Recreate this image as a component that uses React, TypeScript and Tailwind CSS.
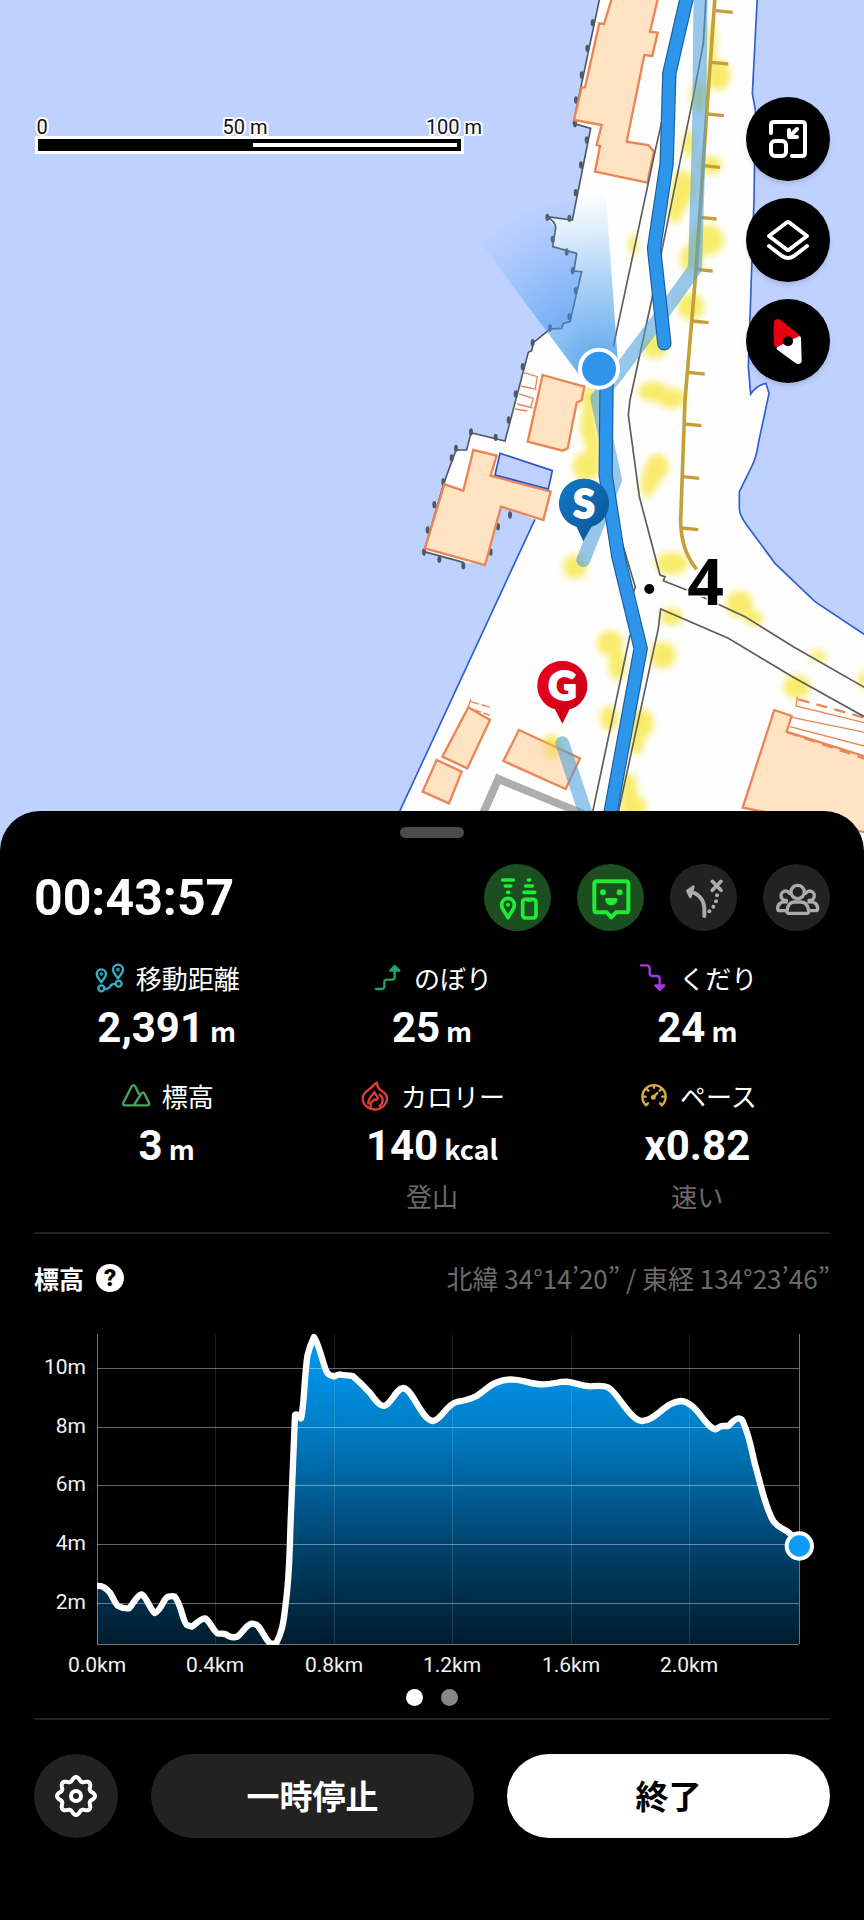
import React from "react";

type IconProps = { children: React.ReactNode; color: string; size: string };

// every small icon is drawn around a 0,0 centre
const Icon = ({ children, color, size }: IconProps) => (
  <svg
    viewBox="-48 -48 96 96"
    className={`shrink-0 overflow-visible ${size}`}
    fill="none"
    stroke={color}
    strokeWidth={7}
    strokeLinecap="round"
    strokeLinejoin="round"
    aria-hidden="true"
  >
    {children}
  </svg>
);

const DistanceIcon = () => (
  <Icon color="#35b0c4" size="size-8">
    <path d="M-26 13C-31 4-40-1-40-12a14 14 0 0 1 28 0c0 11-9 16-14 25z" />
    <path d="M24 1C19-8 9-14 9-25a15 15 0 0 1 30 0c0 11-10 17-15 26z" />
    <circle cx="-26" cy="-12" r="2" />
    <circle cx="24" cy="-25" r="2" />
    <circle cx="-26" cy="31" r="9" />
    <circle cx="26" cy="17" r="9" />
    <path d="M-16 32C4 38-4 14 16 18" />
  </Icon>
);

const UpIcon = () => (
  <Icon color="#1fa566" size="size-8">
    <path d="M-36 33h16q9 0 9-8V13q0-8 8-8h15q8 0 8-8v-30" />
    <path d="M7-22 20-36 34-22z" fill="#1fa566" />
  </Icon>
);

const DownIcon = () => (
  <Icon color="#a23be0" size="size-8">
    <path d="M-36-38h16q10 0 10 8v16q0 8 8 8H12q8 0 8 8v28" />
    <path d="M7 22 20 36 34 22z" fill="#a23be0" />
  </Icon>
);

const MountainIcon = () => (
  <Icon color="#4aa35a" size="size-8">
    <path d="M-33 28H34q8 0 5-8L26-6q-4-8-10-1L-6 27M-33 28q-8 0-5-8L-14-27q6-11 12-1L9-6" />
  </Icon>
);

const FireIcon = () => (
  <Icon color="#e03c36" size="size-8">
    <path d="M6-40C-4-36-8-26-20-18S-37-4-37 6a36 34 0 0 0 73 0C36-8 22-14 14-20 8-26 6-32 6-40z" />
    <path d="M-20 22C-22 6-8 0-2-12c2 10 10 10 10 18 0 6-6 8-10 4M14-4c12 8 12 26 0 34M-12 32c-4-8 0-14 6-18" />
  </Icon>
);

const GaugeIcon = () => (
  <Icon color="#dba94a" size="size-8">
    <path d="M-24 28A35 35 0 1 1 24 28L18 22M-24 28l6-6" />
    <path d="M-3 5 10-9M0-30v5M-21-20l4 4M21-20l-4 4M-30 2h5M30 2h-5" />
    <circle cx="-2" cy="4" r="4" fill="#dba94a" />
  </Icon>
);

const DevicesIcon = () => (
  <svg viewBox="-69 -69 138 138" className="size-[46px]" fill="none" stroke="#1fec34" strokeWidth={11} strokeLinecap="round" strokeLinejoin="round" aria-hidden="true">
    <path d="M-46-54h32M-38-36h16M-31-17h3M31-54h4M23-36h20M18-17h32" />
    <path d="M-30 59C-36 45-49 36-49 20a19 19 0 0 1 38 0c0 16-13 25-19 39z" />
    <circle cx="-30" cy="20" r="3" strokeWidth={6} />
    <rect x="14" y="4" width="40" height="56" rx="8" />
    <path d="M30 6h9" />
  </svg>
);

const FaceIcon = () => (
  <svg viewBox="-69 -69 138 138" className="size-[46px]" fill="none" stroke="#1fec34" strokeWidth={12} strokeLinecap="round" strokeLinejoin="round" aria-hidden="true">
    <path d="M-42-50H44q8 0 8 8v77q0 8-8 8H15L1 58-13 43h-29q-8 0-8-8v-77q0-8 8-8z" />
    <circle cx="-24" cy="-17" r="9" fill="#1fec34" stroke="none" />
    <circle cx="26" cy="-17" r="9" fill="#1fec34" stroke="none" />
    <path d="M-17 4q0-4 4-4h28q4 0 4 4c0 24-36 24-36 0z" fill="#1fec34" stroke="none" />
  </svg>
);

const DetourIcon = () => (
  <svg viewBox="-69 -69 138 138" className="size-[46px]" fill="none" stroke="#ababab" strokeWidth={11} strokeLinecap="round" strokeLinejoin="round" aria-hidden="true">
    <path d="M1 54V34C1 6-16-14-46-20" strokeWidth={12} />
    <path d="M-32-34-50-21-41-3z" fill="#ababab" strokeWidth={8} />
    <path d="M25-50 51-23M51-50 25-23" />
    <g fill="#ababab" stroke="none">
      <circle cx="39" cy="-8" r="6" />
      <circle cx="36" cy="10" r="6" />
      <circle cx="28" cy="26" r="6" />
      <circle cx="16" cy="40" r="6" />
    </g>
  </svg>
);

const GroupIcon = () => (
  <svg viewBox="-69 -69 138 138" className="size-[46px]" fill="none" stroke="#ababab" strokeWidth={10} strokeLinecap="round" strokeLinejoin="round" aria-hidden="true">
    <circle cx="2" cy="-18" r="20" />
    <path d="M-25 46q-6 0-5-7C-28 18-18 12-8 12h20c12 0 21 8 23 27q1 7-6 7z" />
    <path d="M-22-14a14 14 0 1 0-10 21M26-14a14 14 0 1 1 10 21" />
    <path d="M-34 38h-18q-6 0-6-6c0-14 10-22 26-20M38 38h18q6 0 6-6c0-14-10-22-26-20" />
  </svg>
);

const gearPath = (() => {
  const pts: string[] = [];
  for (let i = 0; i < 128; i++) {
    const a = (i / 128) * Math.PI * 2;
    const r = 17 + 2 * Math.cos(8 * a);
    pts.push(`${(r * Math.sin(a)).toFixed(2)} ${(-r * Math.cos(a)).toFixed(2)}`);
  }
  return `M${pts.join("L")}Z`;
})();

const GearIcon = () => (
  <svg viewBox="-22 -22 44 44" className="size-11" fill="none" stroke="#fff" strokeWidth={4} strokeLinejoin="round" aria-hidden="true">
    <path d={gearPath} />
    <circle r="5" />
  </svg>
);

const greenSpots = [
  [955, 225, 36, 46], [895, 290, 24, 44], [866, 430, 18, 44], [850, 560, 36, 50], [826, 630, 24, 40],
  [840, 595, 30, 40], [930, 495, 36, 28], [922, 720, 50, 46], [875, 775, 34, 42], [700, 735, 14, 32],
  [872, 920, 40, 40], [765, 1040, 38, 36], [760, 1175, 46, 30], [815, 1195, 44, 30], [572, 1200, 28, 40],
  [567, 1275, 26, 60], [580, 1340, 22, 60], [560, 1400, 42, 42], [772, 1400, 34, 38], [755, 1430, 28, 40],
  [742, 1460, 20, 34], [525, 1700, 36, 36], [815, 1690, 50, 34], [1018, 1812, 40, 40], [1062, 1855, 28, 24],
  [815, 1850, 34, 26], [630, 1930, 40, 38], [652, 1995, 26, 46], [788, 1965, 40, 40], [628, 2155, 28, 38],
  [722, 2170, 40, 44], [710, 2215, 24, 50], [1190, 2060, 40, 36], [1255, 1968, 26, 16], [1390, 2040, 16, 26],
  [455, 2240, 30, 36], [685, 2370, 28, 50], [700, 2420, 40, 34], [935, 130, 14, 70],
];

const embankment = [
  [948, 35], [935, 190], [922, 345], [910, 500], [900, 655], [888, 811],
  [876, 966], [864, 1120], [854, 1275], [848, 1433], [845, 1587],
];

const wallDots = [
  [578, 68], [562, 145], [545, 225], [528, 300], [525, 371], [560, 420], [543, 495], [527, 578], [508, 655],
  [442, 652], [458, 718], [500, 756], [518, 812], [527, 872], [508, 950], [450, 984], [398, 1028], [368, 1100],
  [347, 1182], [326, 1260], [287, 1312], [213, 1296], [168, 1345], [155, 1374], [130, 1446], [103, 1514],
  [83, 1590], [72, 1656], [118, 1678], [190, 1697], [272, 1656], [294, 1580], [330, 1545],
];

const Map = () => (
  <svg viewBox="0 0 2592 2574" preserveAspectRatio="xMidYMin slice" className="block w-full h-[858px] bg-[#bfd1ff]" role="img" aria-label="地図">
    <defs>
      <filter id="soft" x="-50%" y="-50%" width="200%" height="200%">
        <feGaussianBlur stdDeviation="11" />
      </filter>
      <radialGradient id="beam" gradientUnits="userSpaceOnUse" cx="597" cy="1105" r="530">
        <stop offset="0" stopColor="#2f8fe6" stopOpacity=".8" />
        <stop offset=".5" stopColor="#4a9cf0" stopOpacity=".45" />
        <stop offset="1" stopColor="#6aaef5" stopOpacity="0" />
      </radialGradient>
      <linearGradient id="startPin" x1="0" y1="0" x2="1" y2="1">
        <stop offset="0" stopColor="#1478c4" />
        <stop offset="1" stopColor="#0a5496" />
      </linearGradient>
      <linearGradient id="goalPin" x1="0" y1="0" x2="1" y2="1">
        <stop offset="0" stopColor="#f0001c" />
        <stop offset="1" stopColor="#bf0014" />
      </linearGradient>
    </defs>
    <g transform="translate(1200 0)" fill="none">
      {/* land */}
      <path
        fill="#fefefe"
        d="M600-10 545 250 520 370 572 385 517 660 440 650 467 685 458 740 530 760 522 813 545 815 510 965 490 970 485 985 450 987 400 1028 395 1052 385 1057 315 1323 213 1298 200 1350 168 1350 132 1448 72 1655 190 1687 255 1695 303 1520 405 1558 0 2432-60 2574H1392V1905L1245 1805 1125 1690 1040 1575Q1018 1545 1018 1525V1475L1055 1400Q1070 1370 1075 1330L1107 1180 1098 1150Q1070 1155 1052 1182L1045 1100 1062 600 1066 330 1057 280 1072-10z"
      />
      <g stroke="#2f5fd0" strokeWidth="5">
        <path d="M1072-10 1057 280 1066 330 1062 600 1045 1100 1052 1182Q1070 1155 1098 1150L1107 1180 1075 1330Q1070 1370 1055 1400L1018 1475V1525Q1018 1545 1040 1575L1125 1690 1245 1805 1400 1908" />
        <path d="M405 1558 0 2432-60 2574" />
      </g>
      <path
        stroke="#505a66"
        strokeWidth="5"
        d="M600-10 545 250 520 370 572 385 517 660 440 650Q468 665 467 685L458 740 530 760 522 813 545 815 510 965 490 970 485 985 450 987 400 1028 395 1052 385 1057 315 1323 213 1298 200 1350 168 1350 132 1448 72 1655 190 1687"
      />
      <g fill="#505a66">
        {wallDots.map(([x, y]) => (
          <ellipse key={`${x}-${y}`} cx={x} cy={y} rx="6" ry="11" />
        ))}
      </g>

      {/* vegetation */}
      <g fill="#f8e95a" opacity=".9" filter="url(#soft)">
        {greenSpots.map(([x, y, rx, ry]) => (
          <ellipse key={`${x}-${y}`} cx={x} cy={y} rx={rx} ry={ry} />
        ))}
      </g>

      {/* buildings */}
      <g fill="#ffe3c2" stroke="#ea8556" strokeWidth="7">
        <path d="M637-10 612 72 598 70 555 262 545 262 522 360 605 375 590 435 600 438 585 515 742 548 762 455 745 435 680 425 733 165 757 168 773 98 750 95 775-10z" />
        <path d="M428 1125 553 1160 545 1200 530 1208 503 1345 488 1352 383 1325z" />
        <path d="M220 1350 290 1367 272 1427 452 1475 430 1560 303 1520 255 1695 75 1645 133 1453 190 1472z" />
        <path d="M205 2122 270 2160 202 2305 127 2270z" />
        <path d="M110 2280 185 2315 147 2410 68 2375z" />
        <path d="M357 2190 540 2275 497 2367 310 2283z" />
        <path d="M1123 2130 1175 2148 1160 2195 1410 2274V2500L1028 2423z" />
      </g>
      <path d="M438 2215 486 2248 470 2280 430 2262z" fill="#f8d24a" opacity=".6" filter="url(#soft)" />
      <g stroke="#ea8556" strokeWidth="4">
        <path d="M370 1117 412 1130 406 1165M362 1158 410 1168M358 1182 400 1195 392 1220M352 1212 398 1224M345 1227 382 1233" />
        <path d="M205 2120 212 2098M212 2105 272 2122M218 2128 268 2145" strokeDasharray="26 8" />
        <path d="M1192 2090 1188 2118 1400 2170M1175 2152 1400 2198M1170 2180 1400 2240" />
        <path d="M1195 2098 1400 2155M1160 2196 1400 2278" strokeDasharray="34 22" strokeWidth="7" />
      </g>
      <path d="M300 1360 457 1412 445 1467 285 1425z" fill="#bfd1ff" stroke="#2f52c8" strokeWidth="5" />
      <path d="M245 2450 295 2337 570 2450" stroke="#adadad" strokeWidth="24" />

      {/* roads */}
      <g stroke="#5c5c5c" strokeWidth="5">
        <path d="M868 0 765 455 640 1040" />
        <path d="M918-10 910 130 880 290 755 900 690 1200 685 1245 718 1490 780 1725 795 1730 790 1742 860 1770M895 1785 1035 1850 1180 1940 1400 2066" />
        <path d="M1400 2154 1180 2032 985 1915 782 1827 775 1885 652 2450" />
        <path d="M640 1540 706 1762 695 1790M690 1905 575 2450" />
      </g>
      <path d="M945-10 920 340 888 811 855 1200 842 1560Q842 1650 890 1708" stroke="#c3a138" strokeWidth="11" />
      <g stroke="#c3a138" strokeWidth="10">
        {embankment.map(([x, y]) => (
          <path key={y} d={`M${x} ${y - 3}l50 5`} />
        ))}
      </g>

      {/* recorded track */}
      <g stroke="#4c9fdc" strokeWidth="42" strokeLinejoin="round" strokeLinecap="round" opacity=".58">
        <path d="M902-20 897 400 885 805 770 965 650 1125 592 1195 645 1440 550 1680" />
        <path d="M487 2230 570 2480" />
      </g>
      <path d="M548 1138 220 700 400 560 616 560 655 1105z" fill="url(#beam)" />
      <g strokeLinejoin="round" strokeLinecap="round">
        <path d="M868-40 808 220 800 490 762 745 793 1030M620 1110 617 1425 655 1670 722 1945 620 2500" stroke="#1b5f9f" strokeWidth="43" />
        <path d="M868-40 808 220 800 490 762 745 793 1030M620 1110 617 1425 655 1670 722 1945 620 2500" stroke="#2d96ea" strokeWidth="36" />
      </g>
      <circle cx="597" cy="1106" r="57" fill="#2d96ea" stroke="#fff" strokeWidth="12" />

      {/* spot height */}
      <circle cx="748" cy="1767" r="15" fill="#000" />
      <text x="862" y="1814" fill="#000" stroke="#fff" strokeWidth="8" paintOrder="stroke" fontSize="192" fontWeight="700" fontFamily="'Noto Sans', sans-serif">
        4
      </text>

      {/* start / goal pins */}
      <path d="M552 1436a74 74 0 0 1 22 145L550 1624 530 1581a74 74 0 0 1 22-145z" fill="url(#startPin)" />
      <path d="M487 1983a74 74 0 0 1 22 145L487 2171 465 2128a74 74 0 0 1 22-145z" fill="url(#goalPin)" />
      <g fill="#fff" stroke="#fff" strokeWidth="6" strokeLinejoin="round" fontSize="117" fontWeight="900" fontFamily="Lato, sans-serif" textAnchor="middle">
        <text x="552" y="1553">S</text>
        <text x="487" y="2100">G</text>
      </g>
    </g>
  </svg>
);

const ScaleBar = () => (
  <svg viewBox="0 0 456 50" className="absolute left-[34px] top-[112px] w-[456px] h-[50px]" role="img" aria-label="100 m">
    <g fontSize="20" fill="#111" stroke="#fff" strokeWidth="4" strokeLinejoin="round" paintOrder="stroke" fontFamily="Roboto, sans-serif">
      <text x="8" y="22" textAnchor="middle">0</text>
      <text x="211" y="22" textAnchor="middle">50 m</text>
      <text x="420" y="22" textAnchor="middle">100 m</text>
    </g>
    <rect x="1" y="24" width="429" height="18" fill="#fff" />
    <rect x="4" y="27" width="423" height="12" fill="#000" />
    <rect x="219" y="31" width="204" height="4" fill="#fff" />
  </svg>
);

const mapButton =
  "size-[84px] rounded-full bg-black flex items-center justify-center shadow-md shadow-black/10";

const MapButtons = () => (
  <div className="absolute right-[34px] top-[97px] flex flex-col gap-[17px]">
    <button type="button" aria-label="縮小表示" className={mapButton}>
      <svg viewBox="0 0 40 40" className="size-10" fill="none" stroke="#fff" strokeWidth={4} strokeLinecap="round" strokeLinejoin="round">
        <path d="M3 14V6q0-3 3-3h28q3 0 3 3v28q0 3-3 3H24" />
        <rect x="3" y="22" width="15" height="15" rx="4" />
        <path d="M29 10l-7 7M21 11v7h8" />
      </svg>
    </button>
    <button type="button" aria-label="レイヤー" className={mapButton}>
      <svg viewBox="0 0 40 40" className="size-10 overflow-visible" fill="none" stroke="#fff" strokeWidth={4} strokeLinecap="round" strokeLinejoin="round">
        <path d="M18 3q2-2 4 0l17 13-17 13q-2 2-4 0L1 16z" />
        <path d="M1 26l13 10q6 4 12 0l13-10" />
      </svg>
    </button>
    <button type="button" aria-label="コンパス" className={mapButton}>
      <svg viewBox="145 720 120 120" className="size-10 overflow-visible" strokeWidth={10} strokeLinejoin="round">
        <path d="M168 722q6-6 13 0l54 43-66 29q-5-36-1-72z" fill="#e60012" stroke="#e60012" />
        <path d="M176 802l63-31 2 70q-4 6-12 0z" fill="#fff" stroke="#fff" />
        <circle cx="205" cy="781" r="15" fill="#000" />
      </svg>
    </button>
  </div>
);

type StatProps = {
  icon: React.ReactNode;
  label: string;
  value: string;
  unit?: string;
  note?: string;
};

const Stat = ({ icon, label, value, unit, note }: StatProps) => (
  <div className="flex flex-col items-center">
    <div className="flex items-center gap-2.5 text-[26px] leading-10">
      {icon}
      <span>{label}</span>
    </div>
    <p className="font-[Roboto,sans-serif] font-bold text-[42px] leading-[60px]">
      {value}
      {unit && <span className="font-[Noto_Sans_CJK_JP,sans-serif] text-[27px] leading-none ml-1.5">{unit}</span>}
    </p>
    {note && <p className="text-[26px] leading-10 text-[#6b6b6b]">{note}</p>}
  </div>
);

const curve =
  "M291 1095C305 1093 318 1100 330 1115C340 1130 345 1150 355 1155C367 1162 378 1163 387 1162C400 1150 408 1125 425 1120C440 1128 450 1165 464 1176C485 1170 490 1130 505 1127C515 1125 522 1126 524 1127C545 1150 548 1205 562 1213L576 1217C590 1208 600 1192 616 1192C632 1205 645 1237 655 1238C665 1238 672 1237 678 1240C690 1250 705 1249 712 1247C728 1235 738 1212 755 1208C765 1209 772 1212 775 1216C790 1235 800 1262 812 1268L828 1268C845 1235 850 1210 855 1165C870 1060 868 1000 872 900L885 582C890 578 896 582 903 592C912 560 912 480 922 405C928 380 936 360 942 348C958 370 972 440 980 452C985 465 995 465 1003 466C1012 462 1015 460 1020 460C1030 464 1045 462 1058 465C1075 480 1100 505 1112 518C1125 535 1138 555 1152 555C1175 550 1185 505 1210 501C1240 505 1265 600 1300 600C1325 595 1340 550 1370 543C1400 538 1420 530 1430 525C1460 505 1480 478 1530 475C1570 475 1590 490 1630 490C1660 490 1670 482 1700 482C1725 485 1745 495 1770 496C1790 495 1810 492 1825 500C1850 510 1890 598 1925 600C1965 602 1995 542 2042 540C2090 542 2115 620 2147 625C2155 622 2160 615 2168 615L2185 615C2195 605 2205 592 2215 592C2222 592 2228 597 2230 605C2250 650 2255 690 2265 730C2280 780 2295 860 2320 900C2340 928 2355 920 2372 940C2380 950 2390 960 2397 973";

const yTicks = [
  { y: 47, label: "10m" },
  { y: 106, label: "8m" },
  { y: 164, label: "6m" },
  { y: 223, label: "4m" },
  { y: 282, label: "2m" },
];

const xTicks = [
  { x: 63, label: "0.0km" },
  { x: 181, label: "0.4km" },
  { x: 300, label: "0.8km" },
  { x: 418, label: "1.2km" },
  { x: 537, label: "1.6km" },
  { x: 655, label: "2.0km" },
];

const ElevationChart = () => (
  <svg viewBox="0 0 796 360" className="block w-full h-auto" role="img" aria-label="標高グラフ">
    <defs>
      <linearGradient id="area" gradientUnits="userSpaceOnUse" x1="0" y1="340" x2="0" y2="1270">
        <stop offset="0" stopColor="#009cf8" />
        <stop offset=".28" stopColor="#0080ca" />
        <stop offset=".5" stopColor="#005f98" />
        <stop offset=".75" stopColor="#003a5e" />
        <stop offset="1" stopColor="#001c2d" />
      </linearGradient>
      <clipPath id="plot">
        <rect x="291" y="300" width="2110" height="972" />
      </clipPath>
    </defs>
    <g transform="translate(-34 -100) scale(.33333)" clipPath="url(#plot)">
      <path d={`${curve}V1270H291Z`} fill="url(#area)" />
    </g>
    <g stroke="#fff">
      {yTicks.map((t) => (
        <path key={t.y} d={`M63 ${t.y}H765`} strokeOpacity=".4" strokeWidth="1" shapeRendering="crispEdges" />
      ))}
      {xTicks.slice(1).map((t) => (
        <path key={t.x} d={`M${t.x} 13V323`} strokeOpacity=".12" strokeWidth="1" shapeRendering="crispEdges" />
      ))}
      <path d="M63 13V323M765 13V323M63 323H765" strokeOpacity=".45" strokeWidth="1" shapeRendering="crispEdges" />
    </g>
    <g transform="translate(-34 -100) scale(.33333)">
      <path d={curve} fill="none" stroke="#fff" strokeWidth="19" strokeLinejoin="round" clipPath="url(#plot)" />
      <circle cx="2398" cy="975" r="38" fill="#0d9df8" stroke="#fff" strokeWidth="12" />
    </g>
    <g fill="#f2f2f2" fontSize="21" fontFamily="Roboto, sans-serif">
      {yTicks.map((t) => (
        <text key={t.label} x="52" y={t.y + 6} textAnchor="end">
          {t.label}
        </text>
      ))}
      {xTicks.map((t) => (
        <text key={t.label} x={t.x} y="351" textAnchor="middle">
          {t.label}
        </text>
      ))}
    </g>
  </svg>
);

const App = () => {
  return (
    <div className="bg-black text-white font-[Noto_Sans_CJK_JP,sans-serif] min-h-screen" lang="ja">
      {/* map */}
      <div className="relative">
        <Map />
        <ScaleBar />
        <MapButtons />
      </div>

      {/* sheet */}
      <div className="relative -mt-[47px] rounded-t-[40px] bg-black px-[34px] pt-4 pb-20">
        <div className="mx-auto w-16 h-[11px] rounded-full bg-[#4a4a4a]" />

        <div className="mt-[26px] flex items-center justify-between">
          <h1 className="font-[Roboto,sans-serif] font-bold text-[50px] leading-[60px]">00:43:57</h1>
          <div className="flex gap-[26px]">
            <button type="button" aria-label="端末連携" className="size-[67px] rounded-full bg-[#1c4f1f] flex items-center justify-center">
              <DevicesIcon />
            </button>
            <button type="button" aria-label="みまもり" className="size-[67px] rounded-full bg-[#1c4f1f] flex items-center justify-center">
              <FaceIcon />
            </button>
            <button type="button" aria-label="ルート外れ警告" className="size-[67px] rounded-full bg-[#222] flex items-center justify-center">
              <DetourIcon />
            </button>
            <button type="button" aria-label="グループ" className="size-[67px] rounded-full bg-[#222] flex items-center justify-center">
              <GroupIcon />
            </button>
          </div>
        </div>

        {/* stats */}
        <div className="mt-[27px] grid grid-cols-3 gap-y-[18px]">
          <Stat icon={<DistanceIcon />} label="移動距離" value="2,391" unit="m" />
          <Stat icon={<UpIcon />} label="のぼり" value="25" unit="m" />
          <Stat icon={<DownIcon />} label="くだり" value="24" unit="m" />
          <Stat icon={<MountainIcon />} label="標高" value="3" unit="m" />
          <Stat icon={<FireIcon />} label="カロリー" value="140" unit="kcal" note="登山" />
          <Stat icon={<GaugeIcon />} label="ペース" value="x0.82" note="速い" />
        </div>

        <hr className="mt-4 border-0 h-0.5 bg-[#222]" />

        {/* elevation */}
        <div className="mt-6 flex items-center justify-between text-[26px] leading-10">
          <div className="flex items-center gap-3">
            <h2 className="font-bold text-[25px]">標高</h2>
            <button type="button" aria-label="ヘルプ" className="size-7 rounded-full bg-white text-black flex items-center justify-center font-[Roboto,sans-serif] font-black text-2xl">
              ?
            </button>
          </div>
          <p className="text-[#6b6b6b]">北緯 34°14’20” / 東経 134°23’46”</p>
        </div>
        <div className="mt-[23px]">
          <ElevationChart />
        </div>
        <div className="mt-2 flex justify-center gap-[18px]">
          <span className="size-[17px] rounded-full bg-white" />
          <span className="size-[17px] rounded-full bg-[#868686]" />
        </div>

        <hr className="mt-3 border-0 h-0.5 bg-[#222]" />

        {/* actions */}
        <div className="mt-[34px] flex gap-[33px]">
          <button type="button" aria-label="設定" className="size-[84px] shrink-0 rounded-full bg-[#222] flex items-center justify-center">
            <GearIcon />
          </button>
          <button type="button" className="flex-1 h-[84px] rounded-full bg-[#222] font-bold text-[33px]">
            一時停止
          </button>
          <button type="button" className="flex-1 h-[84px] rounded-full bg-white text-black font-bold text-[33px]">
            終了
          </button>
        </div>
      </div>
    </div>
  );
};

export default App;
